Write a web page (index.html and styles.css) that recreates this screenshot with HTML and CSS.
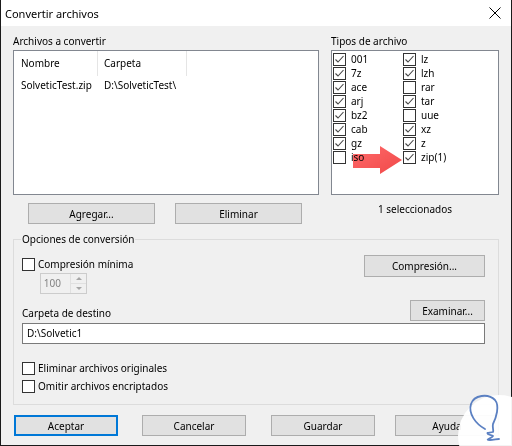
FILE: index.html
```html
<!DOCTYPE html>
<html lang="es">
<head>
<meta charset="utf-8">
<title>Convertir archivos</title>
<link rel="stylesheet" href="styles.css">
</head>
<body>
<div class="window">
  <div class="titlebar">
    <span class="title">Convertir archivos</span>
    <svg class="close" width="12" height="12" viewBox="0 0 12 12"><path d="M0.5 0.5 L11.5 11.5 M11.5 0.5 L0.5 11.5" stroke="#000" stroke-width="1" fill="none"/></svg>
  </div>
  <div class="content">
    <div class="top">
      <div class="files">
        <div class="label">Archivos a convertir</div>
        <div class="listview">
          <div class="lv-header">
            <div class="cell c1">Nombre</div>
            <div class="cell c2">Carpeta</div>
          </div>
          <div class="lv-row">
            <div class="cell c1">SolveticTest.zip</div>
            <div class="cell c2">D:\SolveticTest\</div>
          </div>
        </div>
        <div class="file-buttons">
          <button class="btn wide">Agregar...</button>
          <button class="btn wide">Eliminar</button>
        </div>
      </div>
      <div class="types">
        <div class="label">Tipos de archivo</div>
        <div class="typebox">
          <div class="typegrid">
            <label class="tcheck"><span class="cb on"><svg viewBox="0 0 11 11"><path d="M1.5 5.5 L4 8 L9.5 2"/></svg></span>001</label>
            <label class="tcheck"><span class="cb on"><svg viewBox="0 0 11 11"><path d="M1.5 5.5 L4 8 L9.5 2"/></svg></span>lz</label>
            <label class="tcheck"><span class="cb on"><svg viewBox="0 0 11 11"><path d="M1.5 5.5 L4 8 L9.5 2"/></svg></span>7z</label>
            <label class="tcheck"><span class="cb on"><svg viewBox="0 0 11 11"><path d="M1.5 5.5 L4 8 L9.5 2"/></svg></span>lzh</label>
            <label class="tcheck"><span class="cb on"><svg viewBox="0 0 11 11"><path d="M1.5 5.5 L4 8 L9.5 2"/></svg></span>ace</label>
            <label class="tcheck"><span class="cb"></span>rar</label>
            <label class="tcheck"><span class="cb on"><svg viewBox="0 0 11 11"><path d="M1.5 5.5 L4 8 L9.5 2"/></svg></span>arj</label>
            <label class="tcheck"><span class="cb on"><svg viewBox="0 0 11 11"><path d="M1.5 5.5 L4 8 L9.5 2"/></svg></span>tar</label>
            <label class="tcheck"><span class="cb on"><svg viewBox="0 0 11 11"><path d="M1.5 5.5 L4 8 L9.5 2"/></svg></span>bz2</label>
            <label class="tcheck"><span class="cb"></span>uue</label>
            <label class="tcheck"><span class="cb on"><svg viewBox="0 0 11 11"><path d="M1.5 5.5 L4 8 L9.5 2"/></svg></span>cab</label>
            <label class="tcheck"><span class="cb on"><svg viewBox="0 0 11 11"><path d="M1.5 5.5 L4 8 L9.5 2"/></svg></span>xz</label>
            <label class="tcheck"><span class="cb on"><svg viewBox="0 0 11 11"><path d="M1.5 5.5 L4 8 L9.5 2"/></svg></span>gz</label>
            <label class="tcheck"><span class="cb on"><svg viewBox="0 0 11 11"><path d="M1.5 5.5 L4 8 L9.5 2"/></svg></span>z</label>
            <label class="tcheck"><span class="cb"></span>iso</label>
            <label class="tcheck"><span class="cb on"><svg viewBox="0 0 11 11"><path d="M1.5 5.5 L4 8 L9.5 2"/></svg></span>zip(1)</label>
          </div>
          <svg class="arrow" width="54" height="34" viewBox="351 144 54 34">
            <defs>
              <linearGradient id="ag" x1="0" y1="0" x2="1" y2="1">
                <stop offset="0" stop-color="#ff6b6b"/>
                <stop offset="1" stop-color="#f04848"/>
              </linearGradient>
            </defs>
            <polygon points="353,154 380,154 380,146 402,160 380,174 380,168 353,168" fill="url(#ag)"/>
          </svg>
        </div>
        <div class="count">1 seleccionados</div>
      </div>
    </div>

    <fieldset class="group">
      <legend>Opciones de conversión</legend>
      <div class="row1">
        <div class="leftcol">
          <label class="check"><span class="cb"></span>Compresión mínima</label>
          <div class="spin">
            <span class="spin-val">100</span>
            <span class="spin-btns"><span class="up"></span><span class="down"></span></span>
          </div>
        </div>
        <button class="btn comp">Compresión...</button>
      </div>
      <div class="row2">
        <span class="dest-label">Carpeta de destino</span>
        <button class="btn exam">Examinar...</button>
      </div>
      <div class="textbox">D:\Solvetic1</div>
      <label class="check c1m"><span class="cb"></span>Eliminar archivos originales</label>
      <label class="check c2m"><span class="cb"></span>Omitir archivos encriptados</label>
    </fieldset>

    <div class="actions">
      <button class="btn act default">Aceptar</button>
      <button class="btn act cancel">Cancelar</button>
      <button class="btn act save">Guardar</button>
      <button class="btn act help">Ayuda</button>
    </div>
  </div>
</div>
<svg class="logo" width="56" height="54" viewBox="456 392 56 54">
  <circle cx="499" cy="436" r="41" fill="#ffffff" fill-opacity="0.95"/>
  <path d="M485 429 C476 424 468 414 471 404 C474 395 488 393 495 400 C500 406 496 418 493 424 C492 428 494 430 493 432 C490 433 486 432 488 434 C491 436 495 435 492 437 C489 439 485 440 490 440 C493 440 497 439 499 439" fill="none" stroke="#5b80c2" stroke-width="1.8" stroke-linecap="round" stroke-linejoin="round"/>
</svg>
</body>
</html>
```

FILE: styles.css
```css
* { box-sizing: border-box; }
html, body { margin: 0; padding: 0; }
body {
  position: relative;
  width: 512px;
  height: 446px;
  overflow: hidden;
  background: #f0f0f0;
  font-family: "Noto Sans", "Open Sans", sans-serif;
  font-size: 10px;
  color: #000;
}
.window {
  width: 512px;
  height: 446px;
  border: 1px solid #1a1a1a;
  border-top: none;
  background: #f0f0f0;
  display: flex;
  flex-direction: column;
}
.titlebar {
  height: 26px;
  background: #fff;
  display: flex;
  align-items: center;
  justify-content: space-between;
  padding: 0 10px 0 4px;
  flex: none;
}
.title { font-size: 11px; }
.close { display: block; }

.content { padding: 7px 12px 0 12px; }
.top { display: flex; gap: 12px; }
.files { width: 306px; }
.types { width: 168px; }
.label { line-height: 17px; height: 17px; white-space: nowrap; }

.listview {
  height: 145px;
  border: 1px solid #828790;
  background: #fff;
}
.lv-header, .lv-row { display: flex; }
.lv-header { height: 25px; align-items: center; }
.lv-header .cell { height: 25px; line-height: 25px; border-right: 1px solid #e5e5e5; }
.lv-row { height: 18px; line-height: 18px; }
.cell { white-space: nowrap; overflow: hidden; }
.c1 { width: 84px; padding-left: 7px; }
.c2 { width: 89px; padding-left: 6px; }

.file-buttons { display: flex; gap: 20px; margin-top: 8px; padding-left: 15px; }
.btn {
  font: inherit;
  color: #000;
  background: #e1e1e1;
  border: 1px solid #adadad;
  height: 21px;
  padding: 0;
  margin: 0;
  border-radius: 0;
}
.wide { width: 127px; }

.typebox {
  position: relative;
  height: 145px;
  border: 1px solid #828790;
  background: #fff;
  padding: 1px 0 0 1px;
}
.typegrid {
  display: grid;
  grid-template-columns: 70px 1fr;
  grid-auto-rows: 14px;
}
.tcheck { display: flex; align-items: center; gap: 5px; line-height: 14px; }
.cb {
  flex: none;
  width: 13px;
  height: 13px;
  border: 1px solid #333;
  background: #fff;
  display: inline-block;
}
.cb svg { display: block; width: 11px; height: 11px; fill: none; stroke: #444; stroke-width: 1.1; }
.arrow {
  position: absolute;
  left: 19px;
  top: 93px;
  mix-blend-mode: multiply;
}
.count { text-align: center; margin-top: 7px; line-height: 15px; }

.group {
  margin: 8px 0 0 0;
  border: 1px solid #dcdcdc;
  padding: 9px 13px 10px 8px;
  min-width: 0;
}
.group legend { padding: 0 1px; margin-left: -1px; line-height: 14px; }
.check { display: flex; align-items: center; gap: 3px; line-height: 15px; }
.row1 { display: flex; justify-content: space-between; align-items: flex-start; }
.leftcol .check { margin-top: 2px; }
.comp { width: 121px; height: 22px; }
.spin {
  margin: 1px 0 0 18px;
  width: 47px;
  height: 21px;
  border: 1px solid #cccccc;
  display: flex;
  color: #838383;
}
.spin-val { flex: 1; text-align: right; padding-right: 9px; line-height: 19px; }
.spin-btns { width: 16px; display: flex; flex-direction: column; border-left: 1px solid #e0e0e0; }
.spin-btns span { flex: 1; display: flex; align-items: center; justify-content: center; }
.spin-btns .up { border-bottom: 1px solid #e0e0e0; }
.spin-btns .up::before { content: ""; border: 3px solid transparent; border-bottom: 3px solid #a6a6a6; border-top: 0; }
.spin-btns .down::before { content: ""; border: 3px solid transparent; border-top: 3px solid #a6a6a6; border-bottom: 0; }

.row2 { display: flex; justify-content: space-between; align-items: flex-end; margin-top: 6px; }
.dest-label { line-height: 15px; }
.exam { width: 75px; }
.textbox {
  margin-top: 2px;
  height: 21px;
  border: 1px solid #7a7a7a;
  background: #fff;
  line-height: 19px;
  padding-left: 4px;
}
.c1m { margin-top: 17px; }
.c2m { margin-top: 3px; }

.actions { display: flex; margin-top: 10px; padding-left: 1px; }
.act { width: 104px; }
.default { border: 2px solid #0078d7; }
.cancel { margin-left: 24px; }
.save { margin-left: 25px; }
.help { margin-left: 20px; }

.logo { position: absolute; left: 456px; top: 392px; }
```
